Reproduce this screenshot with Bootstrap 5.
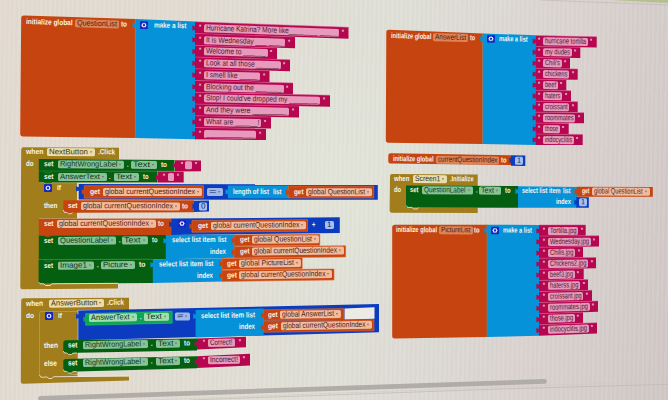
<!DOCTYPE html>
<html lang="en">
<head>
<meta charset="utf-8">
<meta name="viewport" content="width=device-width, initial-scale=1">
<title>Blocks workspace</title>
<link href="https://cdn.jsdelivr.net/npm/bootstrap@5.3.0/dist/css/bootstrap.min.css" rel="stylesheet">
<style>
  body { font-family: "Liberation Sans", Arial, sans-serif; background: #dcd9cf; }
  .workspace {
    width: 668px; height: 400px;
    background:
      repeating-linear-gradient(91deg, rgba(255,255,255,.05) 0 2px, rgba(120,120,110,.02) 2.5px 4.5px),
      radial-gradient(circle at 50% 45%, rgba(226,229,217,.9), rgba(226,228,216,0) 40%),
      linear-gradient(100deg, #e3dad0 0%, #e1dcd2 30%, #dfdfd6 55%, #dad3d0 78%, #d0c7c5 100%);
  }
  .shapes { left: 0; top: 0; }
  /* a line of labels on a block; each line lies on the free canvas */
  .line { height: 10px; transform-origin: 0 50%; white-space: nowrap; }
  .piece { flex: none; font-size: 7.8px; line-height: 8.4px; height: 8.4px; }
  .piece > span { display: inline-block; transform-origin: 0 50%; }
  .word { color: #f9f4ea; font-weight: 700; font-size: 7.6px; }
  .slot { border-radius: 1.6px; color: #222; padding: 0 2px; }
  .caret-mark { width: 0; height: 0; border: 1.4px solid transparent; border-top: 2px solid #6d5a45; border-bottom: 0; margin-right: 1px; opacity: .8; }
  .s-pink { background: #e79abb; color: #4a1c31; }
  .s-name { background: #dd8459; color: #4c1c0c; }
  .s-orange { background: #f2bb9d; color: #4a2418; }
  .s-green { background: #86c497; color: #12351b; }
  .s-mint { background: #9fe0b2; color: #12351b; }
  .s-gold { background: #eadcab; color: #3b3214; }
  .s-blue { background: #a9c0ee; color: #14265e; }
  .s-teal { background: #9fb8e8; color: #14265e; }
</style>
<script src="https://cdn.jsdelivr.net/npm/bootstrap@5.3.0/dist/js/bootstrap.bundle.min.js"></script>
</head>
<body class="m-0 overflow-hidden">
<main class="workspace position-relative overflow-hidden" id="workspace">
  <svg class="shapes position-absolute" width="668" height="400" viewBox="0 0 668 400" aria-hidden="true">
    <path d="M612 0L668 0V3Z" fill="#b3c28c"/>
    <path d="M540 0L668 5" stroke="#c3bab2" stroke-width=".7"/>
    <path d="M150 400L668 381" stroke="#d0c9c3" stroke-width=".6"/>
    <path d="M190 400L500 389L668 384.300" stroke="#bfb8b2" stroke-width=".7" fill="none"/>
    <path d="M40.500 398.300L544.500 381.400" stroke="#b0aca8" stroke-width="4.800" stroke-linecap="round"/>
    <g id="shapes"></g>
  </svg>
</main>
<script>
const O = '#c6440f', B = '#0592d8', P = '#b5064f', G = '#055f10', Y = '#a17e1b', D = '#0b3cc0', L = '#f0ece0';
const shapes = document.getElementById('shapes');
const space = document.getElementById('workspace');

function path(d, fill, stroke, w) {
  const p = document.createElementNS('http://www.w3.org/2000/svg', 'path');
  p.setAttribute('d', d);
  p.setAttribute('fill', fill);
  if (stroke) { p.setAttribute('stroke', stroke); p.setAttribute('stroke-width', w || .6); p.setAttribute('stroke-linejoin', 'round'); }
  shapes.appendChild(p);
}
// a four-sided piece: left x, top and bottom at the left, right x, top and bottom at the right
function quad(c, x0, t0, b0, x1, t1, b1, edge) {
  path(`M${x0} ${t0}L${x1} ${t1}V${b1}L${x0} ${b0}Z`, c, edge);
}
// jigsaw plug on the left side of a piece
function plug(c, x, y) { path(`M${x + .5} ${y - 1.5}L${x - 1} ${y - 1.5}L${x - 2.6} ${y - 2.4}V${y + 3}L${x - 1} ${y + 2.2}H${x + .5}Z`, c); }

const gear = '<svg class="d-block" width="8" height="8" viewBox="0 0 16 16"><rect width="16" height="16" rx="2" fill="#1626c4"/><path d="M8 2.6l1.6 1.9 2.5-.4-.1 2.4L13.6 8l-1.6 1.6.1 2.4-2.5-.4L8 13.4l-1.6-1.8-2.5.4.1-2.4L2.400 8 4 6.500l-.1-2.400 2.500.4z" fill="#d9e4f7"/><circle cx="8" cy="8" r="2.300" fill="#1626c4"/></svg>';

// pieces: [kind, text, left, right, hasCaret]
function line(y0, y1, pieces) {
  const x = pieces[0][2], end = pieces[pieces.length - 1][3];
  const row = document.createElement('div');
  row.className = 'line position-absolute d-flex align-items-center';
  row.style.cssText = `left:${x}px;top:${y0 - 5}px`;
  space.appendChild(row);
  let at = x;
  for (const [kind, text, a, b, caret] of pieces) {
    const el = document.createElement('div');
    el.className = 'piece d-flex align-items-center ' + (kind === 'w' ? 'word' : kind === 'gear' ? '' : 'slot s-' + kind);
    el.style.width = (b - a) + 'px';
    el.style.marginLeft = (a - at) + 'px';
    at = b;
    if (kind === 'gear') el.innerHTML = gear;
    else {
      const s = document.createElement('span');
      s.textContent = text;
      el.appendChild(s);
      if (caret) {
        const c = document.createElement('i');
        c.className = 'caret-mark ms-auto';
        el.appendChild(c);
      }
    }
    row.appendChild(el);
    const s = el.querySelector('span');
    if (s && text) {
      const room = (b - a) - (kind === 'w' ? 0 : 4) - (caret ? 5 : 0);
      const w = s.getBoundingClientRect().width || 1;
      s.style.transform = `scaleX(${room / w})`;
      s.style.marginRight = (room - w) + 'px';
    }
  }
  row.style.transform = `rotate(${Math.atan2(y1 - y0, end - x)}rad)`;
}
const W = (t, a, b) => ['w', t, a, b];
const F = (k, t, a, b) => [k, t, a, b, true];
const Q = x => ['w', '"', x - 1, x + 1];

// column of text items plugged into a "make a list" block
function items(x, top, pitch, s0, s1, field, list) {
  list.forEach(([text, fx, right], i) => {
    const s = s0 + (s1 - s0) * i / (list.length - 1), t = top + pitch * i, dx = (right - x) * s;
    quad(P, x, t, t + pitch, right, t + dx, t + pitch + dx - .3);
    path(`M${x} ${t}L${right} ${t + dx}`, 'none', '#d65a8e', .5);
    plug(P, x, t + pitch / 2);
    const y = t + pitch / 2 + (field - x) * s;
    line(y, y + (right - field) * s, [Q(field - 3.6), ['pink', text, field, fx], Q(fx + 3.8)]);
  });
}

// QuestionList
path('M24 15.400L135.300 19V138L23 136.500Q20.200 136.300 20.200 133.500L21.200 18Q21.300 15.300 24 15.400Z', O);
quad(B, 135.2, 19, 138, 195.3, 21.5, 139.3);
path('M135.300 19V138', 'none', '#6c8a73', .7); plug(B, 135.2, 25);
line(21.5, 25.8, [W('initialize global', 25.7, 72.3), ['name', 'QuestionList', 75, 119], W('to', 121, 127), ['gear', '', 140, 148], W('make a list', 153.5, 186)]);
items(195, 21.8, 11.75, .036, .015, 204, [
  ['Hurricane Katrina? More like________ _____', 339.7, 348.5], ['It is Wednesday ___ ____', 285.7, 295], ['Welcome to ______', 268, 277],
  ['Look at all those ______', 281, 290], ['I smell like _____', 260.3, 269.5], ['Blocking out the _______', 284, 293],
  ["Stop! I could've dropped my ________", 320.3, 330], ['And they were _________', 289.3, 299], ['What are ______!', 261.3, 271], ['____________', 256.3, 266]]);

// AnswerList
path('M389 29.700L482.800 33.500V144L388.500 142.700Q385.800 142.600 385.800 140L386.300 32.500Q386.300 29.600 389 29.700Z', O);
quad(B, 482.8, 33.5, 144, 535.4, 35.2, 145);
path('M482.800 33.500V144', 'none', '#6c8a73', .7); plug(B, 482.8, 38.5);
line(35.8, 39.6, [W('initialize global', 390.7, 431), ['name', 'AnswerList', 433, 468], W('to', 470, 475), ['gear', '', 487, 495], W('make a list', 498.5, 527.3)]);
items(535.3, 35.5, 10.95, .021, .008, 543, [
  ['hurricane tortilla', 588, 596.7], ['my dudes', 572, 580.3], ["Chili's", 562, 570], ['chickens', 569.3, 577.7], ['beef', 558, 566.3],
  ['haters', 562.3, 571], ['croissant', 569.7, 577.7], ['roommates', 575.7, 584], ['those', 560, 568.7], ['iridocyclitis', 574, 582.7]]);

// currentQuestionIndex
path('M391 153.200L511 155.200V165L391 163.600Q388.300 163.500 388.300 161V155.500Q388.300 153.100 391 153.200Z', O);
quad(D, 511, 155.2, 165.7, 525.3, 155.4, 165.9); plug(D, 512, 160);
line(158.6, 160.5, [W('initialize global', 392.5, 433), ['name', 'currentQuestionIndex', 435, 498.5], W('to', 500, 505.5), ['blue', '1', 514.8, 522.8]]);

// Screen1.Initialize
path('M392 174L477.700 174.400V186H406V207.600H477.700V213L392 212.700Q389.600 212.700 389.600 210.500L390 176Q390 174 392 174Z', Y);
quad(G, 406, 185.6, 207.5, 518.2, 186, 207.7);
quad(B, 518, 186.2, 207.8, 577, 187, 207.8); plug(B, 518, 191);
quad(O, 576.7, 186.8, 196.8, 652.8, 187, 196.8); plug(O, 577, 191.5);
quad(D, 576.3, 197, 207.8, 588.8, 197.3, 207.8); plug(D, 577, 202);
path('M406.500 205.500L407.500 207.400H412L413.500 209H417L418.500 207.600', 'none', L, .8);
line(179, 179.3, [W('when', 393.7, 409), F('gold', 'Screen1', 412.7, 447), W('.Initialize', 449.5, 473)]);
line(189.7, 191.5, [W('do', 394, 401), W('set', 409.5, 418), F('green', 'QuestionLabel', 422, 472.5), W('.', 475.5, 477), F('green', 'Text', 479, 501), W('to', 504.5, 510), W('select list item', 521.5, 560), W('list', 562.5, 570), W('get', 582, 589.5), F('orange', 'global QuestionList', 592, 649.5)]);
line(202.3, 202.5, [W('index', 555.5, 570.5), ['blue', '1', 578.8, 586.8]]);

// PictureList
path('M395 224.700L487 224.700V336.900L395 338.500Q392.200 338.500 392.200 336V227.500Q392.200 224.700 395 224.700Z', O);
quad(B, 487, 224.7, 336.9, 539.3, 225, 335.8);
path('M487 224.700V336.900', 'none', '#6c8a73', .7); plug(B, 487, 230);
line(229.7, 230.4, [W('initialize global', 396, 437), ['name', 'PictureList', 439, 472.5], W('to', 474, 479.5), ['gear', '', 491, 499], W('make a list', 502.5, 531.5)]);
items(539, 225, 11.08, -.002, -.035, 547.3, [
  ['Tortilla.jpg', 577.7, 585.7], ['Wednesday.jpg', 590.3, 599], ['Chilis.jpg', 574.7, 583], ['Chickens2.jpg', 587.7, 596], ['beef3.jpg', 574.3, 583.7],
  ['haterss.jpg', 579.7, 588], ['croissant.jpg', 583, 592], ['roommates.jpg', 589.3, 598], ['those.jpg', 574.3, 583], ['iridocyclitis.jpg', 588.3, 597]]);

// NextButton.Click
path('M23.500 147.200L119 147.800V159.500H77V218.500H39V283.500H118V288.600L22.500 289.300Q20.300 289.300 20.300 287L21.200 149.500Q21.300 147.200 23.500 147.200Z', Y);
quad(G, 38.8, 159, 171, 174.5, 160, 171.4);
quad(P, 175, 160.2, 171.5, 201, 160.4, 171.2); plug(P, 175.4, 165);
quad(G, 38.8, 171, 182.7, 157, 171.3, 182.5);
quad(P, 157.4, 171.7, 182.6, 183.7, 171.7, 182.4); plug(P, 157.8, 177);
path('M39 171H174', 'none', '#3c8a45', .5);
path('M39 182.600H43.500L46 184.800H50L52 182.800H156', 'none', '#d2bd7d', .6);
quad(D, 78.7, 184.1, 199.5, 377.8, 184.3, 199.8); plug(D, 78.7, 188.5);
quad(O, 84.3, 185.7, 198.2, 203.5, 185.7, 197.8, '#e0703a'); plug(O, 84.4, 191.5);
quad(B, 227.8, 185.4, 198.3, 289, 185.6, 198.5); plug(B, 228, 191.5);
quad(O, 288.3, 186, 198, 373.7, 186.2, 198, '#e0703a'); plug(O, 288.4, 192);
path('M63.300 200.300H194V212.300L77 212.700H72L70 214H67L65 212.600L63.300 211Z', O);
path('M63.300 210L64.500 212.500H67L68.500 213.700H71L72.500 212.700', 'none', L, .8);
quad(D, 194, 200.7, 212, 209, 200.6, 211.6); plug(D, 195, 206);
quad(O, 38.8, 218.8, 235.3, 172, 218.6, 235);
quad(D, 171.5, 218.6, 235, 339.8, 217.3, 232.9); plug(D, 171.8, 224);
quad(O, 192, 220.5, 232.2, 307.5, 219.7, 231.2, '#e0703a'); plug(O, 192, 226);
quad(G, 38.8, 235.3, 259.7, 166, 235, 259.2);
quad(B, 165.8, 235, 259.2, 235, 234.5, 257.7); plug(B, 166, 240.5);
quad(O, 234.2, 234.9, 246, 319.8, 234.2, 245.4, '#dd6a34'); plug(O, 234.2, 240);
quad(O, 234.2, 246.6, 258, 345.6, 245.8, 257, '#dd6a34'); plug(O, 234.2, 252);
quad(G, 38.6, 259.7, 283.7, 153, 259.2, 283);
quad(B, 152.8, 259.2, 283, 223, 258.3, 281.6); plug(B, 153, 264.5);
quad(O, 222, 258.6, 269.5, 302.2, 257.8, 268.7, '#dd6a34'); plug(O, 222, 263.5);
quad(O, 222, 270.2, 281.4, 334, 269, 280, '#dd6a34'); plug(O, 222, 275);
path('M39 259.500L152 259.100', 'none', '#3c8a45', .5);
path('M43.500 235.200L46 236.700H50L52 235.200Z', O);
path('M43.500 259.600L46 261.300H50L52 259.600M43.500 171L46 173H50L52 171', 'none', '#3c8a45', .6);
path('M38.600 282L40 283.800H43.500L45.500 285.500H50L52 283.800L118 283.300', 'none', L, .9);
line(152, 152.4, [W('when', 25.7, 43), F('gold', 'NextButton', 47, 95), W('.Click', 97.5, 114.5)]);
line(163.7, 165, [W('do', 26, 33.5), W('set', 44, 53.5), F('green', 'RightWrongLabel', 57.5, 124), W('.', 127, 128.5), F('green', 'Text', 131, 157), W('to', 160.5, 166.5), Q(182), ['pink', '', 185, 191.5], Q(196)]);
line(176.7, 176.8, [W('set', 44, 53.5), F('green', 'AnswerText', 57.5, 106.5), W('.', 109, 110.5), F('green', 'Text', 113.5, 138.5), W('to', 143, 148.5), Q(164), ['pink', '', 167.5, 174], Q(178)]);
line(188.5, 188.5, [['gear', '', 43.5, 51.5], W('if', 57, 61)]);
line(191.8, 192, [W('get', 90, 100), F('orange', 'global currentQuestionIndex', 103, 202), F('teal', '=', 206.5, 223), W('length of list', 233, 269), W('list', 272.5, 281), W('get', 293.5, 303), F('orange', 'global QuestionList', 305.5, 371.5)]);
line(205.5, 206, [W('then', 43.5, 57), W('set', 67.5, 77), F('orange', 'global currentQuestionIndex', 80, 179), W('to', 181, 187), ['blue', '0', 198, 206.5]]);
line(224.2, 223.8, [W('set', 43.5, 53), F('orange', 'global currentQuestionIndex', 56.5, 155.5), W('to', 157.5, 163.5), ['gear', '', 177, 185]]);
line(226.1, 225, [W('get', 197.5, 207.5), F('orange', 'global currentQuestionIndex', 210, 305.5), W('+', 311.5, 315), ['blue', '1', 324.5, 333]]);
line(241, 239.3, [W('set', 43.5, 52.5), F('green', 'QuestionLabel', 57, 115), W('.', 118, 119.5), F('green', 'Text', 121.5, 147), W('to', 151.5, 157), W('select list item', 171, 214.5), W('list', 217.5, 226), W('get', 239, 248.5), F('orange', 'global QuestionList', 251.5, 318.5)]);
line(251.8, 250.3, [W('index', 209.5, 225.5), W('get', 239, 248.5), F('orange', 'global currentQuestionIndex', 251.5, 343.5)]);
line(265.7, 262.6, [W('set', 43.5, 52.5), F('green', 'Image1', 57, 93), W('.', 96, 97.5), F('green', 'Picture', 100, 134), W('to', 138, 144.5), W('select list item', 158, 202), W('list', 204.5, 213), W('get', 226.5, 236), F('orange', 'global PictureList', 238.5, 300.5)]);
line(275.8, 273.8, [W('index', 196.5, 212.5), W('get', 226, 236), F('orange', 'global currentQuestionIndex', 238, 331.5)]);

// AnswerButton.Click
path('M23.500 298.300L129 297.700V310H77.500V374H60L129 376.300V380.600L23 383.700Q20.800 383.800 20.800 381.500L21.200 300.500Q21.300 298.300 23.500 298.300Z', Y);
path('M39.500 311.500L77.500 310.500V374L40 377Z', Y);
path('M39.500 376V313.500Q39.500 311.500 41 311.500H78', 'none', '#bfa44f', .7);
path('M77.500 371.800L129 369.500V376.200L77.500 377Z', '#e2ddd3');
quad(D, 78.3, 310.6, 340.3, 379, 304, 332.3); plug(D, 78.7, 316);
path('M344.500 308.500L374.500 307.200V318.800L344.500 319.600Z', '#eceae4');
quad('#10a455', 85.6, 313.6, 325.2, 172.2, 311.3, 323.2, '#2bbf6d'); plug('#10a455', 86, 319);
quad(B, 195.6, 310, 337.5, 263.5, 308.5, 335.3); plug(B, 195.8, 316);
quad(O, 263.4, 309.8, 320.4, 344, 308.6, 319, '#dd6a34'); plug(O, 263.4, 315);
quad(O, 263.4, 321, 332.3, 374, 319.7, 330.7, '#dd6a34'); plug(O, 263.4, 327);
path('M65 340.300L197 338.400V350.500L77.500 352.700L73 353L71.500 354.300H67.500L65.500 352.800L63.300 351.500V342Z', G);
quad(P, 197, 338.5, 349.5, 246, 336.7, 347.3); plug(P, 197.3, 343.5);
path('M65 358.900L197 356.200V368.300L77.500 371.400L73 371.600L71.500 373H67.500L65.500 371.500L63.300 370V360.500Z', G);
quad(P, 197, 356.3, 368, 250, 353.8, 365.5); plug(P, 197.3, 361.5);
path('M63.300 351L64.500 353H67L68.500 354.400H71.500L73 353.100H77M63.300 369.500L64.500 371.600H67L68.500 373H71.500L73 371.700H77', 'none', L, .8);
path('M39.500 375L41 377.300L47 377L49 378.500H52L53.500 376.700L129 376', 'none', L, .8);
line(304.3, 303, [W('when', 26, 43), F('gold', 'AnswerButton', 48.5, 104), W('.Click', 107, 124)]);
line(316.3, 316.3, [W('do', 26, 34), ['gear', '', 44.5, 52.5], W('if', 58, 62)]);
line(318.3, 314.2, [F('mint', 'AnswerText', 89, 136.5), W('.', 139.5, 141), F('mint', 'Text', 144, 169), F('teal', '=', 174.5, 190), W('select list item', 200.5, 243.5), W('list', 246, 255), W('get', 268, 277.5), F('orange', 'global AnswerList', 280, 341)]);
line(327, 324.7, [W('index', 238.5, 254.5), W('get', 267.5, 277.5), F('orange', 'global currentQuestionIndex', 280, 371.5)]);
line(345.6, 342, [W('then', 44, 58), W('set', 68, 77.5), F('green', 'RightWrongLabel', 82.5, 147.5), W('.', 151, 152.5), F('green', 'Text', 155.5, 180), W('to', 184, 190), Q(204), ['pink', 'Correct!', 208, 234.5], Q(239.5)]);
line(364.3, 359.8, [W('else', 44, 57), W('set', 68, 77.5), F('green', 'RightWrongLabel', 82.5, 147.5), W('.', 151, 152.5), F('green', 'Text', 155.5, 180), W('to', 184, 190), Q(204), ['pink', 'Incorrect!', 208, 240], Q(244)]);
</script>
</body>
</html>
